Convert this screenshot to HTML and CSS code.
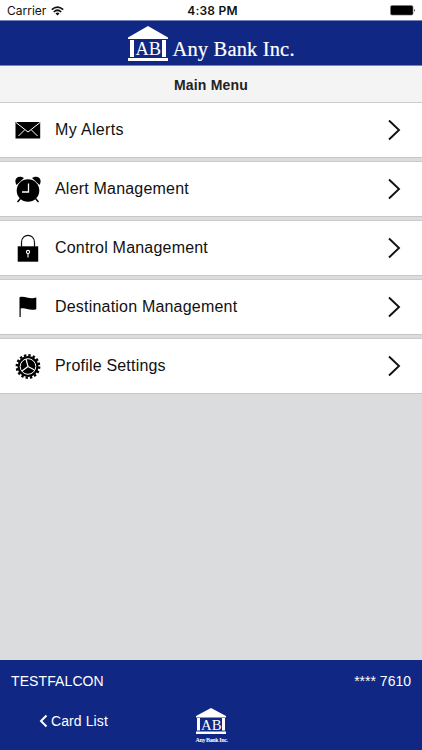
FILE: index.html
```html
<!DOCTYPE html>
<html lang="en">
<head>
<meta charset="utf-8">
<meta name="viewport" content="width=device-width, initial-scale=1">
<title>Main Menu</title>
<link rel="stylesheet" href="styles.css">
</head>
<body>
<div class="app">
  <header class="status">
    <div class="carrier"><span>Carrier</span>
      <svg width="13" height="10" viewBox="0 0 13 10" fill="none" stroke="#111" stroke-width="1.7"><path d="M.8 3.7Q6.5-1.5 12.2 3.7M2.8 6Q6.5 2.5 10.2 6"/><path d="M6.5 9.5 4.5 7.4Q6.5 5.8 8.5 7.4Z" fill="#111" stroke="none"/></svg>
    </div>
    <time class="clock">4:38 PM</time>
    <svg class="battery" width="26" height="11" viewBox="0 0 26 11"><rect x=".5" y=".5" width="22.5" height="9.6" rx="1.5" stroke="#777" stroke-width=".6"/><path d="M24 3.7Q25.5 5.3 24 6.9Z"/></svg>
  </header>
  <div class="brand">
    <svg width="168" height="36" viewBox="0 0 168 36" fill="#fff">
      <path d="M1 11.5 21 0 41 11.5V13H1ZM3 14H7V31H3ZM35 14H39V31H35ZM1 32H41V35H1Z"/>
      <text class="serif" x="8.5" y="29" font-size="18.5" textLength="25.5" lengthAdjust="spacingAndGlyphs">AB</text>
      <text class="serif wordmark" x="45.5" y="30" font-size="20.5" textLength="122" lengthAdjust="spacing">Any Bank Inc.</text>
    </svg>
  </div>
  <h1 class="title">Main Menu</h1>
  <main class="menu">
    <a class="row"><svg class="icon" viewBox="0 0 28 28"><path d="M1.5 6H26.2V22.5H1.5Z"/><path d="m2 6.500 12 9.500 12-9.500M4.500 20l6-6M23.500 20l-6-6" fill="none" stroke="#fff" stroke-width="1"/></svg><span class="label">My Alerts</span><svg class="chevron" viewBox="0 0 14 22"><path d="m2 1.500 10 9.500-10 9.500"/></svg></a>
    <a class="row"><svg class="icon" viewBox="0 0 28 28"><circle cx="14" cy="15.500" r="11.300"/><path d="M2.500 10C-1 4.500 4 -1 10 3ZM25.500 10C29 4.500 24-1 18 3Z"/><path d="m6.500 23.500-3 3.500M21.500 23.500l3 3.500" stroke="#000" stroke-width="1.500"/><path d="M14.500 8.500v8.500H8" fill="none" stroke="#fff" stroke-width="1.300"/></svg><span class="label">Alert Management</span><svg class="chevron" viewBox="0 0 14 22"><path d="m2 1.500 10 9.500-10 9.500"/></svg></a>
    <a class="row"><svg class="icon" viewBox="0 0 28 28"><path d="M3.700 12.300H24.200V27.700H3.700Z"/><path d="M7.500 13V8.500C7.500-1 20.500-1 20.500 8.500V13" fill="none" stroke="#111" stroke-width="1.200"/><g fill="none" stroke="#fff" stroke-width="1.100"><circle cx="14" cy="18" r="1.600"/><path d="M14 19.500v4"/></g></svg><span class="label">Control Management</span><svg class="chevron" viewBox="0 0 14 22"><path d="m2 1.500 10 9.500-10 9.500"/></svg></a>
    <a class="row"><svg class="icon" viewBox="0 0 28 28"><path d="M5.500 4.200C11 2.500 15 6.800 22.300 4.600V16.200C15 18 12 14.500 6.700 15.500V24H5.500Z"/></svg><span class="label">Destination Management</span><svg class="chevron" viewBox="0 0 14 22"><path d="m2 1.500 10 9.500-10 9.500"/></svg></a>
    <a class="row"><svg class="icon" viewBox="0 0 28 28"><circle cx="14" cy="14.500" r="10.500"/><circle cx="14" cy="14.500" r="11.200" fill="none" stroke="#000" stroke-width="2.400" stroke-dasharray="2.400 1.998"/><circle cx="14" cy="14.500" r="7.800" fill="none" stroke="#fff" stroke-width="1"/><path d="m14 14.500-2-7.500M14 14.500 8 19M14 14.500l6.500 3.500" stroke="#fff" stroke-width="1.200"/></svg><span class="label">Profile Settings</span><svg class="chevron" viewBox="0 0 14 22"><path d="m2 1.500 10 9.500-10 9.500"/></svg></a>
  </main>
  <footer class="footer">
    <div class="account"><span class="user">TESTFALCON</span><span>**** 7610</span></div>
    <div class="nav">
      <a class="back"><svg width="9" height="14" viewBox="0 0 9 14"><path d="M7.500 1.500 2 7l5.500 5.500" fill="none" stroke="#fff" stroke-width="2"/></svg><span>Card List</span></a>
      <svg class="footlogo" width="34" height="36" viewBox="0 0 34 36" fill="#fff">
        <path d="M1 8 16 0 31 8V9.500H1ZM2 10H5V22.500H2ZM27 10H30V22.500H27ZM1 23.500H31V26H1Z"/>
        <text class="serif" x="6" y="21.500" font-size="14.500" textLength="20.500" lengthAdjust="spacingAndGlyphs">AB</text>
        <text class="serif small" x=".5" y="33.500" font-size="6" textLength="32.500">Any Bank Inc.</text>
      </svg>
    </div>
  </footer>
</div>
</body>
</html>
```
FILE: styles.css
```css
* { box-sizing: border-box; }
body { margin: 0; font-family: "Liberation Sans", Arial, sans-serif; color: #111; }
.app { height: 750px; display: flex; flex-direction: column; background: #dbdcde; }
.status { height: 20px; flex: none; background: #fff; display: grid; grid-template-columns: 1fr auto 1fr; align-items: center; padding: 1px 6px 0 7px; font-family: Inter, sans-serif; font-size: 12px; }
.carrier { display: flex; align-items: center; gap: 5px; letter-spacing: 0; }
.clock { font-weight: 600; letter-spacing: .25px; padding-left: 2px; }
.battery { justify-self: end; }
.brand { height: 46px; flex: none; display: flex; justify-content: center; padding-top: 5px; background: #102783; border-top: 1px solid #7885bb; border-bottom: 1px solid #7885bb; }
.serif { font-family: "Liberation Serif", "Times New Roman", serif; }
.wordmark { stroke: #fff; stroke-width: .2px; }
.small { font-weight: bold; }
.title { height: 37px; flex: none; margin: 0; background: #f4f4f4; border-bottom: 1px solid #ccc; text-align: center; font-size: 14px; line-height: 38px; letter-spacing: .2px; color: #222; }
.menu { flex: 1; display: flex; flex-direction: column; gap: 3px; }
.row { height: 56px; flex: none; display: flex; align-items: center; padding: 0 21px 0 14px; background: #fff; border-top: 1px solid #c9cacc; border-bottom: 1px solid #c6c7c9; }
.row:first-child { height: 55px; border-top: 0; }
.icon { width: 28px; height: 28px; margin-right: 13px; }
.label { flex: 1; font-size: 16px; line-height: 20px; padding-bottom: 1px; letter-spacing: .2px; }
.row:first-child .label { letter-spacing: .35px; }
.chevron { width: 14px; height: 22px; fill: none; stroke: #111; stroke-width: 1.9; }
.footer { height: 90px; flex: none; background: #102783; color: #fff; font-size: 14px; }
.account { height: 42px; display: flex; justify-content: space-between; align-items: center; padding: 0 11px; }
.user { letter-spacing: .1px; }
.nav { height: 48px; display: grid; grid-template-columns: 195px 34px 1fr; }
.back { display: flex; align-items: center; gap: 3px; padding: 0 0 10px 39px; height: 48px; letter-spacing: .1px; }
.footlogo { margin-top: 6px; }
```
